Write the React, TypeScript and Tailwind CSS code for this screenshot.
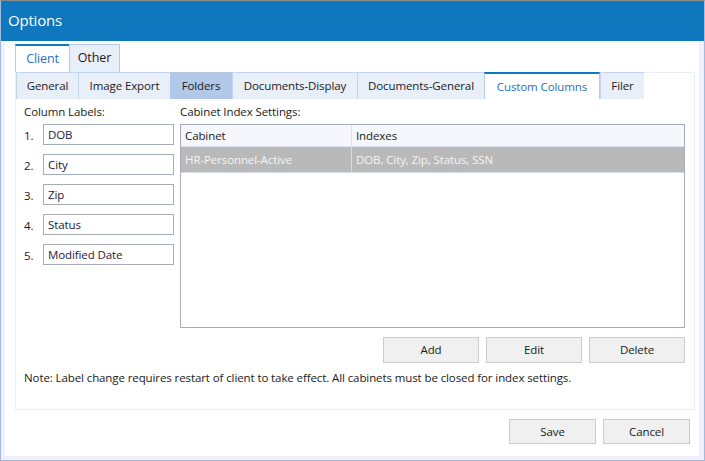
import React from 'react';

// ============================================================================
// OPTIONS DIALOG – Custom Columns page
// ============================================================================

const font = { fontFamily: '"Open Sans", "Noto Sans", Arial, sans-serif' };

const subTabs: Array<{ label: string; width: string; state?: 'active' | 'hover' }> = [
  { label: 'General', width: 'w-[62px]' },
  { label: 'Image Export', width: 'w-[92px]' },
  { label: 'Folders', width: 'w-[62px]', state: 'hover' },
  { label: 'Documents-Display', width: 'w-[125px]' },
  { label: 'Documents-General', width: 'w-[127px]' },
  { label: 'Custom Columns', width: 'w-[116px]', state: 'active' },
  { label: 'Filer', width: 'w-[44px]' },
];

const columnLabels = ['DOB', 'City', 'Zip', 'Status', 'Modified Date'];

function DialogButton({ label, className }: { label: string; className: string }) {
  return (
    <button className={`bg-[#f0f0f0] border border-[#cccccc] text-[11.5px] tracking-[-0.1px] text-[#1a1a1a] ${className}`}>
      {label}
    </button>
  );
}

export default function App() {
  return (
    <div
      className="w-[705px] h-[461px] flex flex-col border border-[#a3bbe0] border-t-[#8c8c8c] bg-white text-[#1a1a1a] text-[11.5px] tracking-[-0.1px] overflow-hidden"
      style={font}
    >
      {/* Title bar */}
      <div className="h-[40px] shrink-0 bg-[#0f77bd] flex items-center pl-[7px] pb-[1px]">
        <span className="text-white text-[15px] tracking-[-0.2px]">Options</span>
      </div>

      <div className="flex-1 flex flex-col border-l-[4px] border-r-[5px] border-b-[4px] border-[#f2effb] pl-[10px] pr-[4px] pt-[3px]">
        {/* Top tabs */}
        <div className="flex h-[28px]">
          <div className="w-[54px] flex items-center justify-center bg-white border-t-2 border-t-[#0f77bd] border-l border-l-[#b5cbea] text-[#1f6fc0] text-[12.5px]">
            Client
          </div>
          <div className="w-[51px] flex items-center justify-center bg-[#e9eff8] border border-b-0 border-[#b5cbea] text-[12.5px]">
            Other
          </div>
        </div>

        {/* Page panel */}
        <div className="h-[338px] flex flex-col border border-[#e6f0fb]">
          <div className="flex h-[27px] -mt-px shrink-0">
            {subTabs.map((tab) => (
              <div
                key={tab.label}
                className={`${tab.width} flex items-center justify-center whitespace-nowrap
                  ${tab.state === 'active'
                    ? 'bg-white border-t-2 border-t-[#0f77bd] border-x border-x-[#b5cbea] text-[#1f6fc0]'
                    : tab.state === 'hover'
                      ? 'bg-[#b2c8e9]'
                      : 'bg-[#e9eff8] border-t border-l border-[#c3d4ee]'}
                `}
              >
                {tab.label}
              </div>
            ))}
          </div>

          <div className="flex-1 flex flex-col pl-[8px] pr-[9px]">
            <div className="flex gap-[6px]">
              {/* Column labels */}
              <div className="w-[150px] flex flex-col">
                <div className="h-[25px] flex items-center">Column Labels:</div>
                <div className="flex flex-col gap-[9px]">
                  {columnLabels.map((label, i) => (
                    <div key={label} className="flex items-center h-[21px]">
                      <span className="w-[19px] pt-[3px]">{i + 1}.</span>
                      <div className="w-[131px] h-[21px] border border-[#a6adba] flex items-center pl-[4px] text-[#1b1b3c]">
                        {label}
                      </div>
                    </div>
                  ))}
                </div>
              </div>

              {/* Cabinet index settings */}
              <div className="flex-1 flex flex-col">
                <div className="h-[25px] flex items-center">Cabinet Index Settings:</div>
                <div className="h-[204px] border border-[#a6adba] flex flex-col">
                  <div className="flex h-[22px] bg-[#f5f7fc] border-b border-[#dde3f0]">
                    <div className="w-[171px] border-r border-[#dde3f0] flex items-center pl-[4px]">Cabinet</div>
                    <div className="flex-1 flex items-center pl-[4px]">Indexes</div>
                  </div>
                  <div className="flex h-[26px] bg-[#b9b9b9] border-b border-[#d4dcea] text-[#f5f5f5]">
                    <div className="w-[171px] border-r border-[#d4dcea] flex items-center pl-[4px]">HR-Personnel-Active</div>
                    <div className="flex-1 flex items-center pl-[4px]">DOB, City, Zip, Status, SSN</div>
                  </div>
                </div>
                <div className="flex justify-end gap-[7px] mt-[9px]">
                  <DialogButton label="Add" className="w-[96px] h-[26px]" />
                  <DialogButton label="Edit" className="w-[96px] h-[26px]" />
                  <DialogButton label="Delete" className="w-[96px] h-[26px]" />
                </div>
              </div>
            </div>

            <div className="mt-[7px] h-[16px] flex items-center whitespace-nowrap">
              Note: Label change requires restart of client to take effect. All cabinets must be closed for index settings.
            </div>
          </div>
        </div>

        {/* Footer */}
        <div className="flex justify-end gap-[7px] mt-[9px] mr-[5px]">
          <DialogButton label="Save" className="w-[87px] h-[25px]" />
          <DialogButton label="Cancel" className="w-[87px] h-[25px]" />
        </div>
      </div>
    </div>
  );
}
